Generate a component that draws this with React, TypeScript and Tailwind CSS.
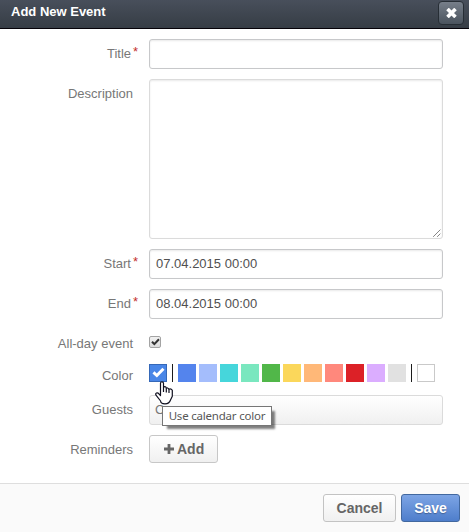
import type { ReactNode } from 'react';

const swatches = [
  'bg-[#5484ed]',
  'bg-[#a4bdfc]',
  'bg-[#46d6db]',
  'bg-[#7ae7bf]',
  'bg-[#51b749]',
  'bg-[#fbd75b]',
  'bg-[#ffb878]',
  'bg-[#ff887c]',
  'bg-[#dc2127]',
  'bg-[#dbadff]',
  'bg-[#e1e1e1]',
];

const field =
  'block w-[294px] rounded-[3px] border bg-white px-1.5 text-[13px] text-[#505050] shadow-[inset_0_1px_2px_rgba(0,0,0,0.09)] outline-none';

function Row({ label, required, className, children }: { label: string; required?: boolean; className: string; children: ReactNode }) {
  return (
    <div className={`flex ${className}`}>
      <div className="flex h-[30px] w-[133px] shrink-0 justify-end pt-px text-[13px] leading-[28px] whitespace-nowrap text-[#777]">
        <span>{label}</span>
        {required && <span className="-mr-[5px] ml-[2px] w-[5px] -translate-y-[2px] text-[#c4302b]">*</span>}
      </div>
      <div className="ml-4">{children}</div>
    </div>
  );
}

function Check({ className }: { className: string }) {
  return (
    <svg viewBox="0 0 14 12" className={className} fill="none" stroke="currentColor" strokeWidth="3.2">
      <path d="M1.5 5.8 5.2 9.3 12.4 1.8" />
    </svg>
  );
}

function Pointer() {
  return (
    <svg viewBox="0 0 18 24" className="absolute top-[17px] left-[6px] z-20 h-[24px] w-[18px]" fill="#fff" stroke="#101020" strokeWidth="1.2" strokeLinejoin="round">
      <path d="M5.5 14.5V2.3Q5.5.8 7 .8T8.5 2.3V6.8Q8.8 5.5 10 5.7T11.3 7.2Q12.5 6.2 13.8 8.2Q16 7.2 17.3 9.3V15.2L15.5 19Q14.3 22.8 10 22.8T5.6 20L1 14.2Q.2 12.7 1.5 12T4 13Z" />
      <path d="M8.5 6.8V11M11.3 7.2V11.5M14 8.3V12" fill="none" />
    </svg>
  );
}

export default function App() {
  return (
    <div className="flex h-[532px] w-[469px] flex-col overflow-hidden bg-white font-['Liberation_Sans',Arial,sans-serif]">
      <header className="flex h-[29px] shrink-0 items-start justify-between border-b border-[#050208] bg-linear-to-b from-[#484f5b] to-[#363d45] pr-[5px] pl-[11px]">
        <h1 className="text-[13px] leading-[24px] font-bold text-white">Add New Event</h1>
        <button aria-label="Close" className="mt-px flex h-6 w-[26px] items-center justify-center rounded-[4px] border border-[#272e35] bg-linear-to-b from-[#777f8a] to-[#4b545e] text-white">
          <svg viewBox="0 0 11 10" className="h-[10px] w-[11px]" stroke="currentColor" strokeWidth="3.6">
            <path d="m1.5 1 8 8m0-8-8 8" />
          </svg>
        </button>
      </header>

      <main className="h-[454px] shrink-0 pt-[10px]">
        <Row label="Title" required className="h-10">
          <input className={`${field} h-[30px] border-[#c7c8ca]`} />
        </Row>
        <Row label="Description" className="h-[170px]">
          <div className="relative">
            <textarea className={`${field} h-40 resize-none border-[#dbdbdb]`} />
            <svg viewBox="0 0 8 8" className="absolute right-[2px] bottom-[2px] size-[8px]" stroke="#333" strokeWidth="1" strokeDasharray="1 .42">
              <path d="M.5 7.5 7.5.5M4.5 7.5l3-3" />
            </svg>
          </div>
        </Row>
        <Row label="Start" required className="h-10">
          <input className={`${field} h-[30px] border-[#c7c8ca] pb-[2px]`} defaultValue="07.04.2015 00:00" />
        </Row>
        <Row label="End" required className="h-10">
          <input className={`${field} h-[30px] border-[#c7c8ca] pb-[2px]`} defaultValue="08.04.2015 00:00" />
        </Row>
        <Row label="All-day event" className="h-8">
          <div className="mt-[7px] flex size-3 items-center justify-center rounded-[2px] border border-[#a3a3a3] bg-linear-to-b from-[#f1f1f1] to-[#dcdcdc] text-[#333]">
            <Check className="h-[8px] w-[9px] shrink-0" />
          </div>
        </Row>
        <Row label="Color" className="h-[34px]">
          <div className="relative mt-[3px] flex h-[18px]">
            <div className="flex size-[18px] justify-center border border-[#3568b8] bg-[#4986e7] pt-[2px] text-white">
              <Check className="h-[11px] w-[13px] shrink-0" />
            </div>
            <div className="mx-[5px] w-px bg-[#1c1c1c]" />
            <div className="flex gap-[3px]">
              {swatches.map((color) => (
                <div key={color} className={`size-[18px] ${color}`} />
              ))}
            </div>
            <div className="mx-[5px] w-px bg-[#1c1c1c]" />
            <div className="size-[18px] border border-[#c9c9c9] bg-white" />
            <Pointer />
            <div className="absolute top-[42px] left-[13px] z-10 flex h-5 w-[110px] items-center justify-center border border-[#767676] bg-white font-['Noto_Sans',sans-serif] text-[11.5px] tracking-[-0.2px] whitespace-nowrap text-[#575757] shadow-[4px_4px_2px_-1px_rgba(0,0,0,0.5)]">
              Use calendar color
            </div>
          </div>
        </Row>
        <Row label="Guests" className="h-10">
          <div className="h-[30px] w-[294px] rounded-[3px] border border-[#dbdbdb] bg-linear-to-b from-white to-[#f0f0f0] px-[5px] text-[13px] leading-[27px] text-[#777]">
            C
          </div>
        </Row>
        <Row label="Reminders" className="h-[30px]">
          <button className="flex h-7 w-[69px] items-center rounded-[3px] border border-[#c7c7c7] bg-linear-to-b from-white to-[#f0f0f0] pl-[14px] text-[14px] font-bold text-[#666]">
            <svg viewBox="0 0 10 10" className="mr-[3px] size-[10px]" stroke="currentColor" strokeWidth="2.8">
              <path d="M5 0v10M0 5h10" />
            </svg>
            Add
          </button>
        </Row>
      </main>

      <footer className="flex h-[49px] shrink-0 justify-end gap-[5px] border-t border-[#dedede] bg-[#fafafa] pt-[10px] pr-[9px]">
        <button className="h-7 w-[73px] rounded-[3px] border border-[#c3c3c3] bg-linear-to-b from-white to-[#f0f0f0] text-[14px] leading-[26px] font-bold text-[#666]">
          Cancel
        </button>
        <button className="h-7 w-[59px] rounded-[3px] border border-[#42689f] bg-linear-to-b from-[#7da5e5] to-[#4e7ecb] text-[14px] leading-[26px] font-bold text-white [text-shadow:0_1px_1px_rgba(0,0,0,0.3)]">
          Save
        </button>
      </footer>
    </div>
  );
}
